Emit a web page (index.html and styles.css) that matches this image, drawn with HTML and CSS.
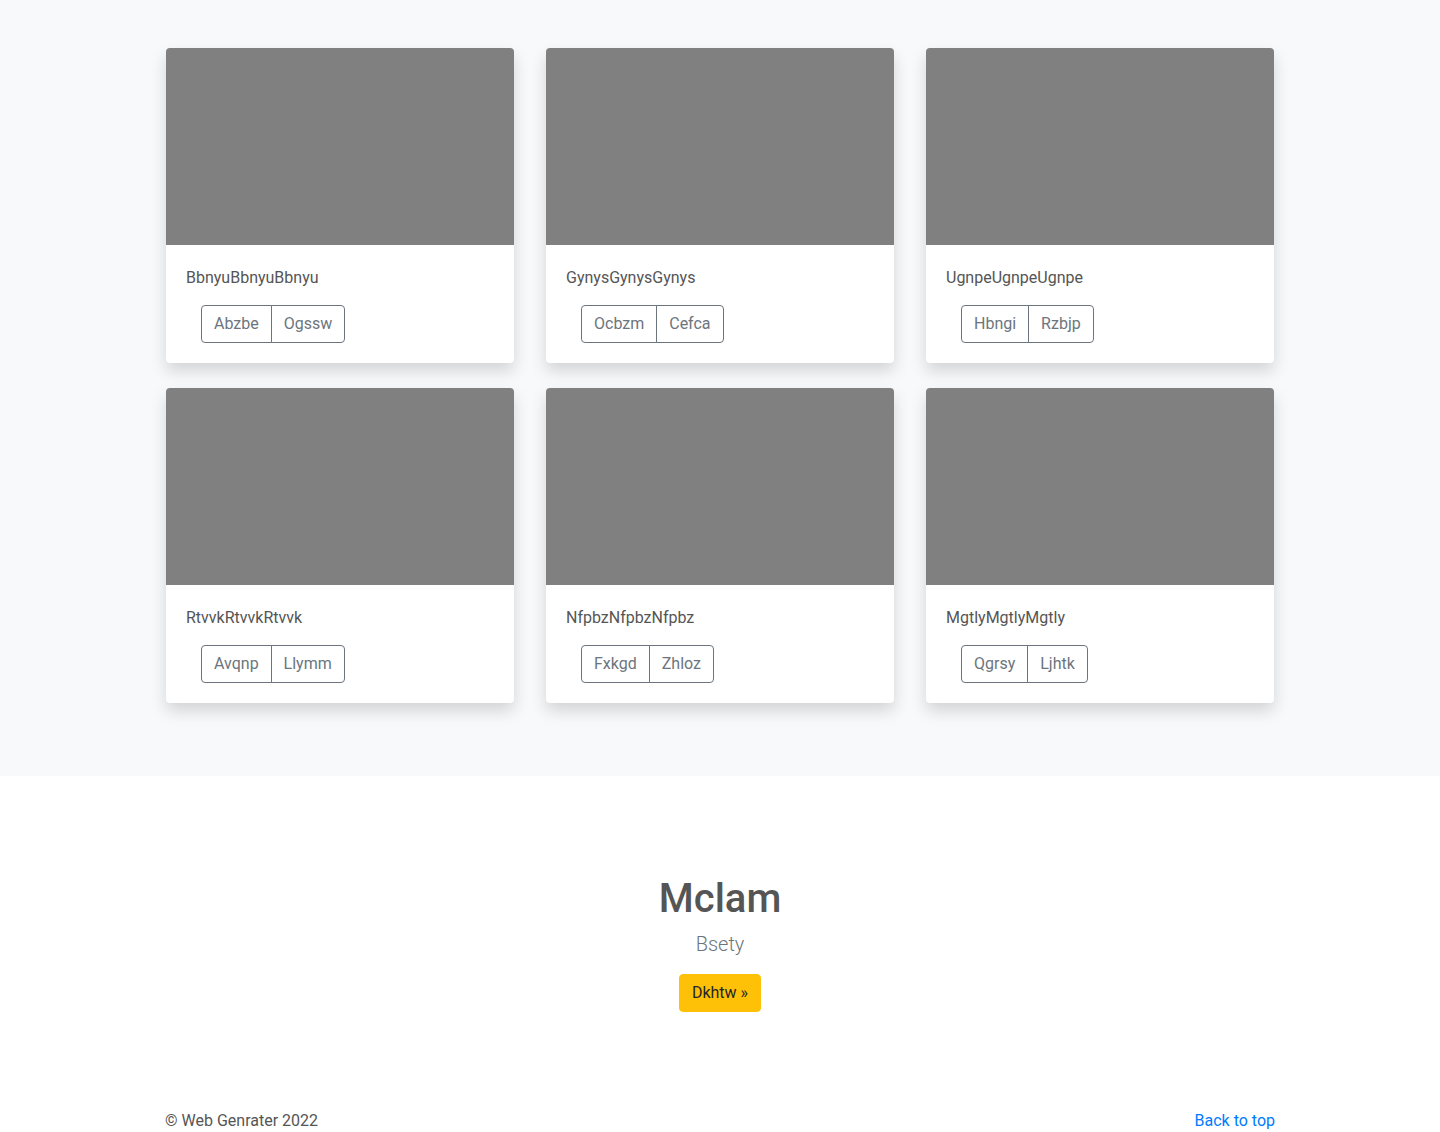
FILE: index.html
```html
<!DOCTYPE html>
<html lang="en">
<head>
<meta charset="utf-8">
<title>Album</title>
<link rel="stylesheet" href="styles.css">
</head>
<body>
<main>
  <section class="album">
    <div class="grid">
      <div class="card"><div class="thumb"></div><div class="card-body"><p class="card-text">BbnyuBbnyuBbnyu</p><div class="btn-group"><button class="btn">Abzbe</button><button class="btn">Ogssw</button></div></div></div>
      <div class="card"><div class="thumb"></div><div class="card-body"><p class="card-text">GynysGynysGynys</p><div class="btn-group"><button class="btn">Ocbzm</button><button class="btn">Cefca</button></div></div></div>
      <div class="card"><div class="thumb"></div><div class="card-body"><p class="card-text">UgnpeUgnpeUgnpe</p><div class="btn-group"><button class="btn">Hbngi</button><button class="btn">Rzbjp</button></div></div></div>
      <div class="card"><div class="thumb"></div><div class="card-body"><p class="card-text">RtvvkRtvvkRtvvk</p><div class="btn-group"><button class="btn">Avqnp</button><button class="btn">Llymm</button></div></div></div>
      <div class="card"><div class="thumb"></div><div class="card-body"><p class="card-text">NfpbzNfpbzNfpbz</p><div class="btn-group"><button class="btn">Fxkgd</button><button class="btn">Zhloz</button></div></div></div>
      <div class="card"><div class="thumb"></div><div class="card-body"><p class="card-text">MgtlyMgtlyMgtly</p><div class="btn-group"><button class="btn">Qgrsy</button><button class="btn">Ljhtk</button></div></div></div>
    </div>
  </section>
  <section class="hero">
    <h1 class="hero-title">Mclam</h1>
    <p class="lead">Bsety</p>
    <a class="btn-warning" href="#">Dkhtw »</a>
  </section>
</main>
<footer class="footer">
  <p class="copy">© Web Genrater 2022</p>
  <a class="top-link" href="#">Back to top</a>
</footer>
</body>
</html>
```
FILE: styles.css
```css
* { box-sizing: border-box; }
html, body { margin: 0; padding: 0; }
body {
  font-family: "Segoe UI", Roboto, "Noto Sans", "Liberation Sans", sans-serif;
  font-size: 16px;
  line-height: 1.5;
  color: #555;
  background: #fff;
}
.album {
  background: #f8f9fa;
  padding: 48px 0 49px;
}
.grid {
  width: 1108px;
  margin: 0 auto;
  display: grid;
  grid-template-columns: repeat(3, 348px);
  column-gap: 32px;
  row-gap: 25px;
  padding-bottom: 24px;
}
.card {
  background: #fff;
  border-radius: 4px;
  overflow: hidden;
  box-shadow: 0 8px 16px rgba(0,0,0,.15);
}
.thumb {
  height: 197px;
  background: #808080;
}
.card-body {
  padding: 21px 20px 20px;
}
.card-text {
  margin: 0 0 15px;
  color: #555;
}
.btn-group {
  display: inline-flex;
  margin-left: 15px;
}
.btn {
  font: inherit;
  font-size: 16px;
  line-height: 24px;
  padding: 6px 12px;
  color: #6c757d;
  background: transparent;
  border: 1px solid #6c757d;
  border-radius: 0;
  cursor: pointer;
}
.btn:first-child { border-radius: 4px 0 0 4px; }
.btn:last-child { border-radius: 0 4px 4px 0; margin-left: -1px; }
.hero {
  text-align: center;
  padding: 99px 0 64px;
}
.hero-title {
  margin: 0 0 6px;
  font-size: 40px;
  font-weight: 500;
  line-height: 1.2;
  color: #555;
}
.lead {
  margin: 0 0 15px;
  font-size: 20px;
  font-weight: 300;
  color: #6c757d;
}
.btn-warning {
  display: inline-block;
  padding: 6px 12px;
  line-height: 24px;
  font-size: 16px;
  background: #ffc107;
  border: 1px solid #ffc107;
  color: #212529;
  border-radius: 4px;
  text-decoration: none;
}
.footer {
  width: 1110px;
  margin: 0 auto;
  display: flex;
  justify-content: space-between;
  align-items: flex-start;
  padding: 33px 0 48px;
}
.copy { margin: 0; color: #555; }
.top-link { color: #007bff; text-decoration: none; }
```
